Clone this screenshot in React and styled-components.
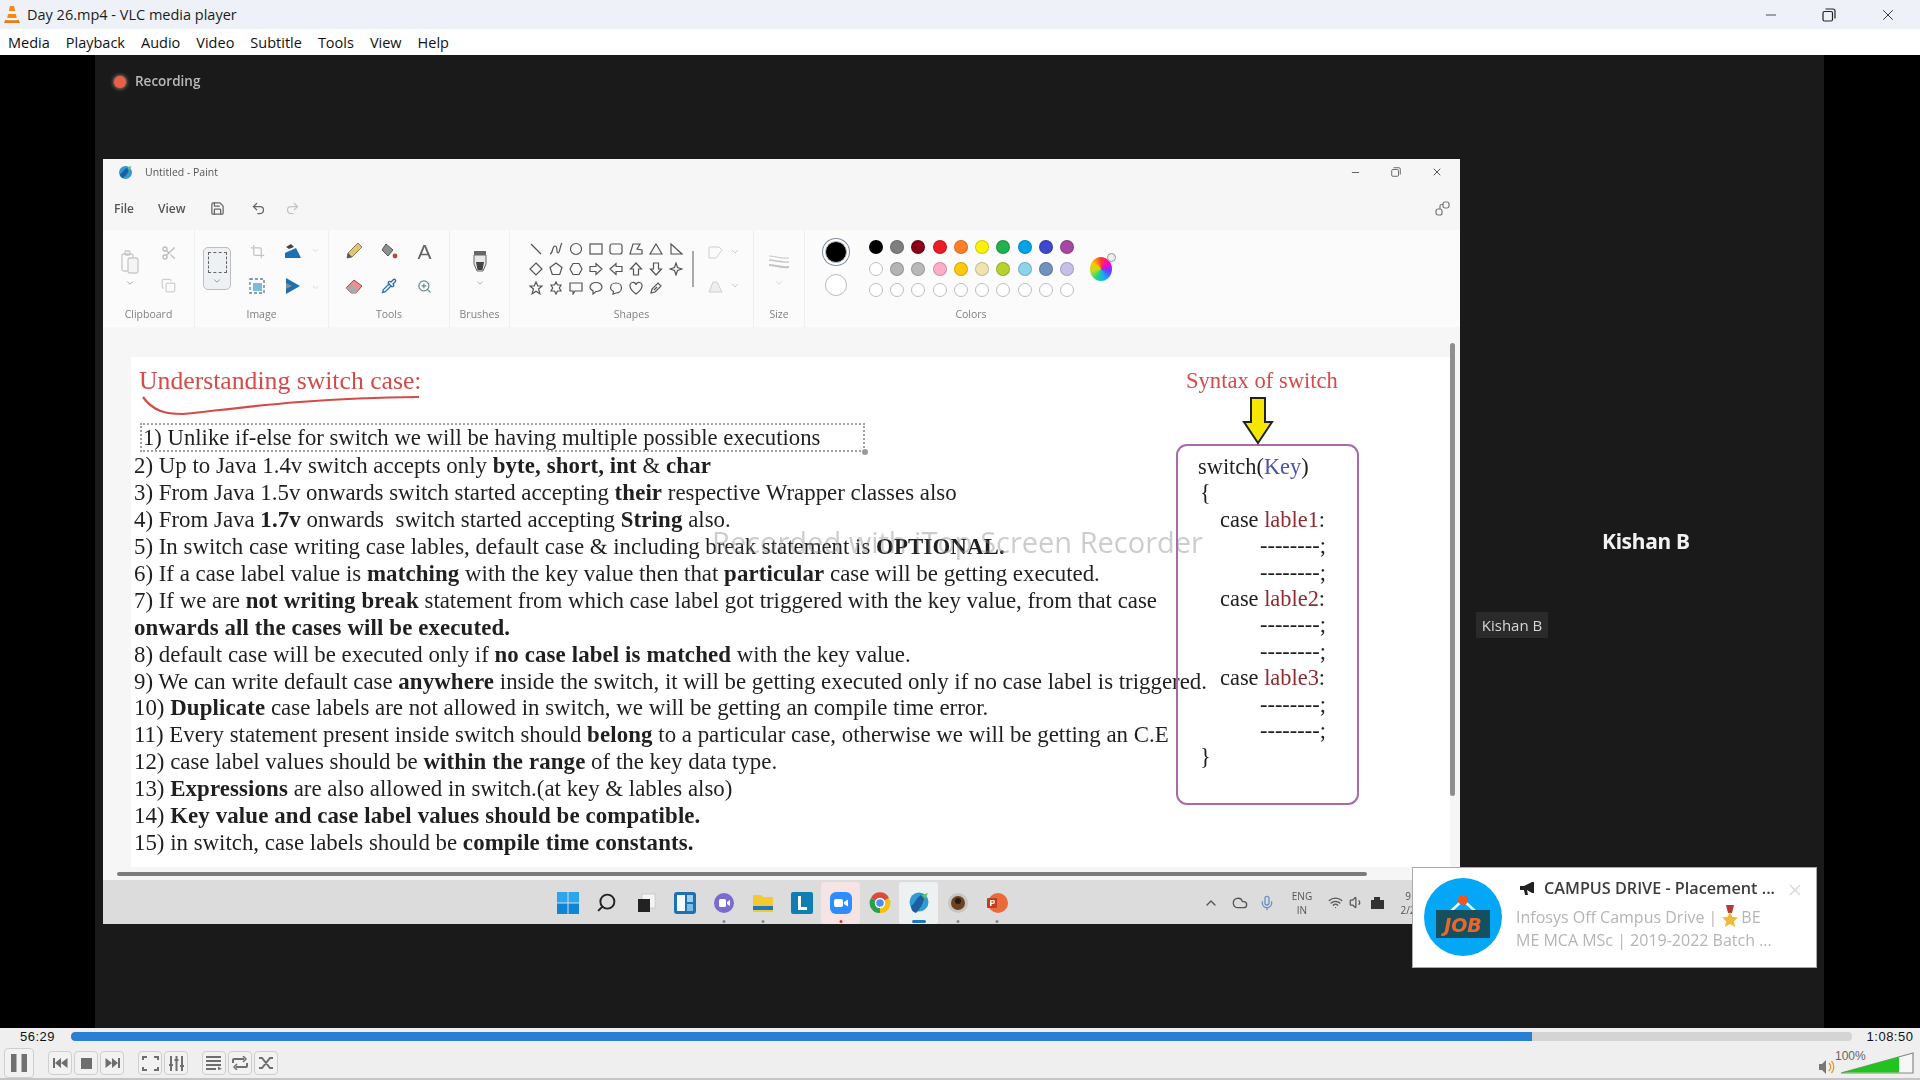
import React from 'react';
import styled, { createGlobalStyle } from 'styled-components';
import {
  Scissors, Copy, Crop, Pencil, ZoomIn, Pipette, ChevronDown, Save, Undo2, Redo2,
  Minus, X, ChevronUp, Cloud, Mic, Wifi, Volume1, Search,
} from 'lucide-react';

const GlobalStyle = createGlobalStyle`
  html, body { margin: 0; padding: 0; background: #000; overflow: hidden; }
  * { box-sizing: border-box; }
`;

const UI_FONT = `"Open Sans", "Noto Sans", sans-serif`;
const DOC_FONT = `"Liberation Serif", serif`;

/* ---------- VLC chrome ---------- */

const Player = styled.div`
  width: 1920px;
  height: 1080px;
  display: flex;
  flex-direction: column;
  font-family: ${UI_FONT};
`;

const TitleBar = styled.div`
  height: 29px;
  flex: none;
  display: flex;
  align-items: center;
  padding-left: 3px;
  background: #eef2f8;
  color: #1c1c1c;
  font-size: 14.5px;
`;

const TitleText = styled.span`
  margin-left: 6px;
`;

const WindowButtons = styled.div`
  margin-left: auto;
  display: flex;
  align-items: center;
  gap: 43px;
  padding-right: 23px;
  color: #222;
`;

const MenuBar = styled.div`
  height: 26px;
  flex: none;
  display: flex;
  align-items: center;
  gap: 16px;
  padding-left: 8px;
  background: #fff;
  color: #111;
  font-size: 14.5px;
`;

const VideoArea = styled.div`
  flex: 1;
  min-height: 0;
  background: #000;
  padding: 0 96px 0 95px;
`;

const Stage = styled.div`
  position: relative;
  height: 100%;
  background: #1a1a1a;
  display: flex;
  flex-direction: column;
`;

const RecordingBadge = styled.div`
  height: 104px;
  flex: none;
  display: flex;
  align-items: flex-start;
  gap: 9px;
  padding: 17px 0 0 19px;
  color: #b9b9b9;
  font-size: 13.5px;
  font-weight: 600;
  filter: blur(0.7px);
`;

const RecordingDot = styled.span`
  width: 12px;
  height: 12px;
  margin-top: 4px;
  border-radius: 50%;
  background: #e8604a;
  box-shadow: 0 0 4px #f5b4a6;
`;

const StageBody = styled.div`
  display: flex;
  padding-left: 8px;
`;

const SidePane = styled.div`
  flex: 1;
  display: flex;
  flex-direction: column;
  padding: 368px 0 0 16px;
`;

const SpeakerName = styled.div`
  margin-left: 126px;
  height: 38px;
  color: #f2f2f2;
  font-size: 21px;
  font-weight: 700;
  font-family: "Noto Sans", sans-serif;
  letter-spacing: -0.3px;
  filter: blur(0.4px);
`;

const SpeakerTag = styled.div`
  align-self: flex-start;
  margin-top: 47px;
  width: 72px;
  height: 26px;
  display: flex;
  align-items: center;
  justify-content: center;
  background: #2a2a2a;
  color: #d6d6d6;
  font-size: 15px;
  white-space: nowrap;
  filter: blur(0.4px);
`;

const Watermark = styled.div`
  position: absolute;
  left: 617px;
  top: 467px;
  color: rgba(135, 135, 135, 0.42);
  font-family: "Open Sans", sans-serif;
  font-size: 29px;
  white-space: nowrap;
  filter: blur(0.6px);
`;

/* ---------- Paint window ---------- */

const PaintWindow = styled.div`
  position: relative;
  width: 1357px;
  height: 765px;
  flex: none;
  display: flex;
  flex-direction: column;
  background: #f6f6f6;
  filter: blur(0.55px);
`;

const PaintTitleRow = styled.div`
  height: 28px;
  flex: none;
  display: flex;
  align-items: center;
  padding: 0 0 2px 15px;
  color: #555;
  font-size: 10.5px;
  gap: 12px;
`;

const PaintControls = styled.div`
  margin-left: auto;
  display: flex;
  align-items: center;
  gap: 30px;
  padding-right: 17px;
  color: #555;
`;

const PaintToolbar = styled.div`
  height: 43px;
  flex: none;
  display: flex;
  align-items: center;
  padding: 0 10px 0 11px;
  color: #555;
  font-size: 12px;
  font-weight: 600;
`;

const ToolbarLabel = styled.span`
  margin-right: ${p => p.$gap}px;
`;

const ToolbarIcon = styled.span`
  display: flex;
  margin-right: ${p => p.$gap}px;
  color: ${p => p.$color || '#666'};
`;

const ShareButton = styled.span`
  margin-left: auto;
  display: flex;
  color: #777;
`;

const Ribbon = styled.div`
  height: 97px;
  flex: none;
  display: flex;
  background: #fbfbfb;
`;

const RibbonGroup = styled.div`
  width: ${p => p.$width}px;
  flex: none;
  display: flex;
  flex-direction: column;
  align-items: center;
  border-right: ${p => (p.$last ? 'none' : '1px solid #f0f0f0')};
  color: #777;
`;

const GroupBody = styled.div`
  height: 77px;
  width: 100%;
  display: flex;
  align-items: center;
  justify-content: center;
`;

const GroupLabel = styled.div`
  font-size: 10.5px;
  color: #808080;
  line-height: 14px;
`;

const IconGrid = styled.div`
  display: grid;
  grid-template-columns: repeat(${p => p.$cols}, ${p => p.$w}px);
  grid-auto-rows: ${p => p.$h}px;
  align-items: center;
  justify-items: center;
`;

const Stack = styled.div`
  display: flex;
  flex-direction: column;
  align-items: center;
  gap: ${p => p.$gap || 0}px;
  margin-right: ${p => p.$mr || 0}px;
  margin-left: ${p => p.$ml || 0}px;
  margin-top: ${p => p.$mt || 0}px;
`;

const SelectionBox = styled.div`
  width: 28px;
  height: 43px;
  margin-right: 8px;
  border: 1.5px solid #b8c0c6;
  border-radius: 5px;
  background: #edf1f3;
  display: flex;
  flex-direction: column;
  align-items: center;
  padding-top: 4px;
  color: #888;
`;

const SelectionMark = styled.div`
  width: 19px;
  height: 21px;
  margin-bottom: 3px;
  border: 1.5px dashed #666;
`;

const TextTool = styled.span`
  color: #666;
  font-family: "Liberation Sans", sans-serif;
  font-size: 21px;
  line-height: 1;
`;

const ShapesPanel = styled.div`
  display: flex;
  align-items: center;
  gap: 4px;
  color: #555;
`;

const ShapesScroll = styled.div`
  width: 2px;
  height: 36px;
  margin-left: 2px;
  background: #aaa;
`;

const ColorLayout = styled.div`
  display: flex;
  align-items: center;
  padding-left: 20px;
  width: 100%;
`;

const ActiveColors = styled.div`
  display: flex;
  flex-direction: column;
  align-items: center;
  gap: 11px;
  margin-right: 18px;
`;

const ActiveSwatch = styled.div`
  width: 22px;
  height: 22px;
  border-radius: 50%;
  background: ${p => p.$color};
  border: 1px solid #bbb;
  box-shadow: ${p => (p.$selected ? '0 0 0 2px #fff, 0 0 0 3px #7f8fa3' : 'none')};
`;

const SwatchGrid = styled.div`
  display: grid;
  flex: none;
  grid-template-columns: repeat(10, 21.3px);
  grid-auto-rows: 21.5px;
  align-items: center;
  justify-items: center;
`;

const Swatch = styled.div`
  width: 14px;
  height: 14px;
  border-radius: 50%;
  background: ${p => p.$color || '#fff'};
  border: 1px solid ${p => (p.$color && p.$color !== '#fff' ? 'rgba(0,0,0,0.18)' : '#bdbdbd')};
`;

const ColorWheel = styled.div`
  position: relative;
  width: 22px;
  height: 24px;
  flex: none;
  margin-left: 12px;
  border-radius: 50%;
  background: conic-gradient(#ff3b30, #ff00c8, #6a3cff, #19a7ff, #20d48a, #b7e21d, #ffc400, #ff3b30);
`;

const WheelBadge = styled.span`
  position: absolute;
  right: -4px;
  top: -4px;
  width: 9px;
  height: 9px;
  border-radius: 50%;
  background: #eee;
  border: 1px solid #999;
`;

const CanvasArea = styled.div`
  height: 553px;
  flex: none;
  padding: 30px 10px 13px 28px;
`;

const Canvas = styled.div`
  height: 100%;
  background: #fff;
  display: flex;
  font-family: ${DOC_FONT};
  color: #1f1f1f;
`;

const NotesColumn = styled.div`
  width: 1045px;
  flex: none;
  padding: 10px 0 0 3px;
`;

const Heading = styled.div`
  padding-left: 5px;
  height: 28px;
  line-height: 28px;
  font-size: 25.7px;
  color: #d44b48;
  white-space: nowrap;
`;

const Scribble = styled.svg`
  display: block;
  margin-left: 8px;
`;

const SelectedLine = styled.div`
  position: relative;
  width: 725px;
  height: 29px;
  margin: 7px 0 0 6px;
  padding-left: 1px;
  border: 2px dotted #a0a0a0;
  line-height: 25px;
  font-size: 22.7px;
  white-space: nowrap;
`;

const Handle = styled.span`
  position: absolute;
  right: -5px;
  bottom: -5px;
  width: 6px;
  height: 6px;
  border-radius: 50%;
  background: #9a9a9a;
`;

const NoteLine = styled.div`
  height: 26.95px;
  line-height: 27px;
  font-size: 22.87px;
  white-space: nowrap;

  b {
    letter-spacing: 0.12px;
  }
`;

const SyntaxColumn = styled.div`
  width: 183px;
  flex: none;
  display: flex;
  flex-direction: column;
  padding-top: 10px;
`;

const SyntaxTitle = styled.div`
  height: 28px;
  line-height: 28px;
  margin-left: 10px;
  font-size: 22.6px;
  color: #d44b48;
  white-space: nowrap;
`;

const SyntaxArrow = styled.svg`
  display: block;
  margin: 2px 0 0 66px;
  position: relative;
  z-index: 1;
`;

const SyntaxBox = styled.div`
  height: 361px;
  margin-top: -1px;
  padding: 8px 0 0 20px;
  border: 2.5px solid #a86aa9;
  border-radius: 11px;
  font-size: 22.4px;
`;

const CodeLine = styled.div`
  height: 26.4px;
  line-height: 26.4px;
  padding-left: ${p => p.$indent || 0}px;
  white-space: nowrap;
`;

const Accent = styled.span`
  color: ${p => p.$color};
`;

const VScroll = styled.div`
  position: absolute;
  left: 1347px;
  top: 184px;
  width: 5px;
  height: 453px;
  border-radius: 3px;
  background: #8e8e8e;
`;

const HScroll = styled.div`
  position: absolute;
  left: 14px;
  top: 713px;
  width: 1250px;
  height: 4px;
  border-radius: 2px;
  background: #7c7c7c;
`;

const Taskbar = styled.div`
  height: 44px;
  flex: none;
  display: flex;
  align-items: center;
  padding: 1px 0 0 445px;
  background: #dcdcdc;
`;

const TaskCell = styled.div`
  position: relative;
  width: 39px;
  height: 42px;
  flex: none;
  display: flex;
  align-items: center;
  justify-content: center;
  background: ${p => p.$bg || 'transparent'};
  border-radius: 3px;
`;

const TaskDot = styled.span`
  position: absolute;
  bottom: 1px;
  left: 50%;
  transform: translateX(-50%);
  width: ${p => p.$w || 3}px;
  height: 3px;
  border-radius: 2px;
  background: ${p => p.$color};
`;

const Tray = styled.div`
  display: flex;
  flex: none;
  align-items: center;
  margin-left: 187px;
  color: #555;
`;

const TrayItem = styled.span`
  display: flex;
  margin-right: ${p => p.$gap}px;
`;

const TrayLang = styled.div`
  width: 24px;
  margin-right: 14px;
  font-size: 10px;
  line-height: 14px;
  text-align: center;
  color: #555;
`;

/* ---------- notification ---------- */

const Notification = styled.div`
  position: absolute;
  left: 1317px;
  top: 812px;
  width: 405px;
  height: 101px;
  display: flex;
  padding: 10px 0 0 11px;
  background: #fff;
  border: 1px solid #aaa;
  filter: blur(0.35px);
`;

const NotifyText = styled.div`
  margin-left: 14px;
  width: 270px;
`;

const NotifyTitle = styled.div`
  display: flex;
  align-items: center;
  gap: 9px;
  height: 20px;
  margin-left: 3px;
  color: #3c3c3c;
  font-size: 16.2px;
  font-weight: 600;
  white-space: nowrap;
`;

const NotifyBody = styled.div`
  margin-top: 7px;
  color: #b5b5b5;
  font-size: 16px;
  line-height: 23px;
  white-space: nowrap;
`;

const NotifyClose = styled.span`
  position: absolute;
  right: 12px;
  top: 13px;
  display: flex;
  color: #d8d8d8;
`;

const Medal = styled.svg`
  vertical-align: -4px;
  margin: 0 3px 0 5px;
`;

/* ---------- VLC controls ---------- */

const Controls = styled.div`
  height: 52px;
  flex: none;
  display: flex;
  flex-direction: column;
  background: #efefef;
  border-bottom: 2px solid #c4c4c4;
`;

const SeekRow = styled.div`
  height: 18px;
  flex: none;
  padding-bottom: 1px;
  display: flex;
  align-items: center;
  font-family: "Liberation Sans", sans-serif;
  font-size: 13px;
  letter-spacing: 0.5px;
  color: #111;
`;

const TimeLabel = styled.span`
  width: ${p => p.$width}px;
  flex: none;
  padding-left: ${p => p.$pad}px;
  text-align: center;
`;

const SeekTrack = styled.div`
  flex: 1;
  height: 9px;
  border-radius: 4px;
  background: #d4d4d4;
  overflow: hidden;
`;

const SeekFill = styled.div`
  height: 100%;
  border-radius: 4px 0 0 4px;
  background: #2a7ed3;
`;

const ButtonRow = styled.div`
  flex: 1;
  display: flex;
  align-items: center;
  padding: 2px 0 0 4px;
`;

const CtrlButton = styled.button`
  width: ${p => p.$size || 24}px;
  height: ${p => p.$size || 24}px;
  margin-right: ${p => p.$gap ?? 2}px;
  padding: 0;
  display: flex;
  align-items: center;
  justify-content: center;
  background: #f2f2f2;
  border: 1px solid #cfcfcf;
  border-radius: 4px;
  color: #6e6e6e;
`;

const VolumeArea = styled.div`
  position: relative;
  margin-left: auto;
  margin-right: 6px;
  display: flex;
  align-items: flex-end;
  gap: 5px;
`;

const VolumeLabel = styled.span`
  position: absolute;
  left: 16px;
  top: -3px;
  font-family: "Liberation Sans", sans-serif;
  font-size: 12px;
  color: #666;
`;

/* ---------- drawings ---------- */

const VlcCone = () => (
  <svg width="18" height="19" viewBox="0 0 18 19">
    <path d="M7 1h4l1.2 5H5.8z" fill="#f08a1d" />
    <path d="M5.8 6h6.4l.7 3H5.1z" fill="#f4f4f4" />
    <path d="M5.1 9h7.8l1 4H4.1z" fill="#f08a1d" />
    <path d="M4.1 13h9.8l.5 2H3.6z" fill="#f4f4f4" />
    <path d="M2.5 14.5 1 18h16l-1.5-3.5-1 .8H3.5z" fill="#e87c10" />
  </svg>
);

const RestoreIcon = ({ size = 14 }) => (
  <svg width={size} height={size} viewBox="0 0 14 14" fill="none" stroke="currentColor" strokeWidth="1.2">
    <rect x="1" y="3.5" width="9.5" height="9.5" rx="1.5" />
    <path d="M3.5 1h7.5a2 2 0 0 1 2 2v7.5" />
  </svg>
);

const PaintLogo = () => (
  <svg width="15" height="15" viewBox="0 0 15 15">
    <circle cx="7.5" cy="7.5" r="6.5" fill="#2f9ad6" />
    <path d="M2 9c3-1 4-6 9-7 1 3-2 8-6 11-2-.5-3-2-3-4z" fill="#1d5f9e" />
    <path d="M9 2.5 13.5 1 11 6z" fill="#5dc26a" />
  </svg>
);

const LinkedBoxes = () => (
  <svg width="15" height="15" viewBox="0 0 15 15" fill="none" stroke="currentColor" strokeWidth="1.2">
    <rect x="1" y="8" width="6" height="6" rx="2" />
    <rect x="8" y="1" width="6" height="6" rx="2" />
    <path d="M5 8V5a1.500 1.500 0 0 1 1.500-1.500H8" />
  </svg>
);

const PasteIcon = () => (
  <svg width="18" height="24" viewBox="0 0 18 24" fill="none" stroke="#c9c9c9" strokeWidth="1.3">
    <rect x="1" y="4" width="11" height="17" rx="2" />
    <rect x="7" y="8" width="10" height="15" rx="2" fill="#f4f4f4" />
    <rect x="4" y="1" width="5" height="4" rx="1" />
  </svg>
);

const ResizeIcon = () => (
  <svg width="16" height="16" viewBox="0 0 16 16">
    <rect x="1" y="1" width="14" height="14" fill="none" stroke="#5b7f9e" strokeWidth="1.3" strokeDasharray="3 2" />
    <rect x="4" y="5" width="9" height="8" fill="#7fb9dc" />
  </svg>
);

const RotateIcon = () => (
  <svg width="18" height="16" viewBox="0 0 18 16">
    <path d="M1 15V10l11-5 5 10z" fill="#1b6fb3" />
    <path d="M2 4 7 1l3 3-5 2z" fill="#444" />
  </svg>
);

const FlipIcon = () => (
  <svg width="16" height="18" viewBox="0 0 16 18">
    <path d="M1 1l14 8-14 8z" fill="#1b6fb3" />
    <path d="M1 6l6 3-6 3z" fill="#8a8a8a" />
  </svg>
);

const PencilIcon = () => (
  <svg width="18" height="18" viewBox="0 0 18 18">
    <path d="M2 16l1-5L13 1l4 4L7 15z" fill="#e3c27a" stroke="#8a7a50" strokeWidth="1" />
    <path d="M2 16l1-5 4 4z" fill="#555" />
  </svg>
);

const FillIcon = () => (
  <svg width="18" height="18" viewBox="0 0 18 18">
    <path d="M6 2l7 6-5 6-6-6z" fill="#8f8f8f" stroke="#555" />
    <circle cx="15" cy="14" r="2.4" fill="#b5482f" />
  </svg>
);

const EraserIcon = () => (
  <svg width="18" height="17" viewBox="0 0 18 17">
    <path d="M1 10l8-8 8 6-6 7H6z" fill="#ec8f91" stroke="#8a5555" />
    <path d="M1 10l5 5h5l2-3-6-5z" fill="#aaa" />
  </svg>
);

const BrushIcon = () => (
  <svg width="14" height="22" viewBox="0 0 14 22">
    <rect x="1" y="1" width="12" height="4" fill="#666" />
    <path d="M1 5h12v9l-3 7H4l-3-7z" fill="#e8e8e8" stroke="#666" />
    <path d="M3 12h8l-1.5 8h-5z" fill="#444" />
  </svg>
);

const LinesIcon = () => (
  <svg width="22" height="16" viewBox="0 0 22 16" fill="none" stroke="#c4c4c4">
    <path d="M1 2c6 0 12 3 20 2" strokeWidth="1" />
    <path d="M1 6c6 0 12 3 20 2" strokeWidth="1.4" />
    <path d="M1 11c6 0 12 3 20 2" strokeWidth="2" />
  </svg>
);

const SHAPES = [
  <path d="M2 2l10 10" />,
  <path d="M1 12c3 0 2-8 5-8s1 7 3 7 2-8 4-10" />,
  <circle cx="7" cy="7" r="5.5" />,
  <rect x="1" y="2" width="12" height="10" />,
  <rect x="1" y="2" width="12" height="10" rx="2" />,
  <path d="M1 12l3-10h7l-3 5 5 1v4z" />,
  <path d="M7 2l6 10H1z" />,
  <path d="M2 2l11 10H2z" />,
  <path d="M7 1l6 6-6 6-6-6z" />,
  <path d="M7 1l6 4.5-2.3 7H3.3L1 5.500z" />,
  <path d="M4 1.500h6L13 7l-3 5.500H4L1 7z" />,
  <path d="M1 4.500h6V1.500L13 7l-6 5.500V9.500H1z" />,
  <path d="M13 4.500H7V1.500L1 7l6 5.500V9.500h6z" />,
  <path d="M4.500 13V7h-3L7 1l5.500 6h-3v6z" />,
  <path d="M4.500 1v6h-3L7 13l5.500-6h-3V1z" />,
  <path d="M7 1l1.500 4.500L13 7l-4.500 1.500L7 13l-1.500-4.500L1 7l4.500-1.500z" />,
  <path d="M7 1l1.800 4H13l-3.400 3 1.300 4.800L7 10.200 3.100 12.800 4.400 8 1 5h4.200z" />,
  <path d="M7 1l1.500 3H12l-1.700 3L12 10H8.500L7 13l-1.500-3H2l1.700-3L2 4h3.500z" />,
  <path d="M1 2h12v8H6l-2 3v-3H1z" />,
  <path d="M7 1.500c3.300 0 6 2 6 4.500s-2.700 4.500-6 4.500l-3 2.500v-3.200C2.200 9 1 7.600 1 6c0-2.500 2.700-4.500 6-4.500z" />,
  <path d="M7 2c3 0 5.500 2 5.500 5S10 12 7 12l-3 1 .5-2.500C2.500 9.500 1.500 8.500 1.500 7 1.500 4 4 2 7 2z" />,
  <path d="M7 13C3 10 1 7.500 1 5a3 3 0 0 1 6-1 3 3 0 0 1 6 1c0 2.500-2 5-6 8z" />,
  <path d="M2 12l1-4 6-6 3 3-6 6zM5 9l3-3" />,
];

const Shape = ({ children }) => (
  <svg width="14" height="14" viewBox="0 0 14 14" fill="none" stroke="currentColor" strokeWidth="1.2">
    {children}
  </svg>
);

const PALETTE = [
  '#000000', '#7f7f7f', '#880015', '#ed1c24', '#ff7f27', '#fff200', '#22b14c', '#00a2e8', '#3f48cc', '#a349a4',
  '#fff', '#b4b4b4', '#b9b9b9', '#ffaec9', '#ffc90e', '#efe4b0', '#b5d32d', '#8fd3ea', '#7092be', '#c8bfe7',
  '', '', '', '', '', '', '', '', '', '',
];

const TASK_ICONS = [
  { key: 'start', icon: (
    <svg width="22" height="22" viewBox="0 0 22 22">
      <rect x="0" y="0" width="10.500" height="10.500" fill="#2aa5ee" />
      <rect x="11.500" y="0" width="10.500" height="10.500" fill="#2aa5ee" />
      <rect x="0" y="11.500" width="10.500" height="10.500" fill="#0e86d8" />
      <rect x="11.500" y="11.500" width="10.500" height="10.500" fill="#0e86d8" />
    </svg>
  ) },
  { key: 'search', icon: <Search size={21} color="#222" strokeWidth={2.2} style={{ transform: 'scaleX(-1)' }} /> },
  { key: 'views', icon: (
    <svg width="20" height="20" viewBox="0 0 20 20">
      <rect x="6" y="1" width="13" height="14" fill="#f4f4f4" stroke="#bbb" strokeWidth="0.6" />
      <rect x="2" y="6" width="12" height="13" fill="#222" />
    </svg>
  ) },
  { key: 'widgets', icon: (
    <svg width="22" height="22" viewBox="0 0 22 22">
      <rect x="0" y="0" width="22" height="22" rx="3" fill="#1f6fb5" />
      <rect x="3" y="3" width="8" height="16" fill="#f4f9fc" />
      <rect x="13" y="3" width="6" height="7" fill="#9fd0ee" />
      <rect x="13" y="12" width="6" height="7" fill="#7cbce4" />
    </svg>
  ) },
  { key: 'chat', icon: (
    <svg width="22" height="22" viewBox="0 0 22 22">
      <circle cx="11" cy="11" r="10" fill="#7b6ad0" />
      <rect x="6" y="7" width="7" height="8" rx="1.500" fill="#fff" />
      <path d="M14 10l3-2v6l-3-2z" fill="#fff" />
    </svg>
  ), dot: '#888' },
  { key: 'files', icon: (
    <svg width="22" height="22" viewBox="0 0 22 22">
      <path d="M1 3h8l2 2h10v15H1z" fill="#f5c92f" />
      <rect x="1" y="14" width="20" height="4" fill="#1b78c4" />
    </svg>
  ), dot: '#888' },
  { key: 'lync', icon: (
    <svg width="22" height="22" viewBox="0 0 22 22">
      <rect x="0" y="0" width="22" height="22" rx="2" fill="#0f7fb3" />
      <path d="M7 4h3v11h6v3H7z" fill="#fff" />
    </svg>
  ) },
  { key: 'zoom', bg: '#f6e3e3', dot: '#d03a2a', icon: (
    <svg width="22" height="22" viewBox="0 0 22 22">
      <rect x="0" y="0" width="22" height="22" rx="6" fill="#2d8cff" />
      <rect x="4" y="7" width="9" height="8" rx="2" fill="#fff" />
      <path d="M14 10l4-2.500v7L14 12z" fill="#fff" />
    </svg>
  ) },
  { key: 'chrome', icon: (
    <svg width="22" height="22" viewBox="0 0 22 22">
      <path d="M11 11 2 6a10 10 0 0 1 18 0z" fill="#dc4a3d" />
      <path d="M11 11 20 6a10 10 0 0 1-9 15z" fill="#f4c20d" />
      <path d="M11 11v10A10 10 0 0 1 2 6z" fill="#2aa04c" />
      <circle cx="11" cy="11" r="4.500" fill="#4a8ef0" stroke="#fff" strokeWidth="1.500" />
    </svg>
  ) },
  { key: 'paint', bg: '#eef1f2', dot: '#1b78c4', dotW: 14, icon: (
    <svg width="22" height="24" viewBox="0 0 22 24">
      <circle cx="11" cy="11" r="9.500" fill="#2f9ad6" />
      <path d="M3 15c4-2 5-9 12-12 3 4-1 13-7 19-3-1-5-3-5-7z" fill="#1d5f9e" />
      <path d="M13 4l7-2-3 6z" fill="#5dc26a" />
    </svg>
  ) },
  { key: 'obs', dot: '#888', icon: (
    <svg width="22" height="22" viewBox="0 0 22 22">
      <circle cx="11" cy="11" r="10" fill="#c9c4be" />
      <circle cx="11" cy="11" r="7" fill="#6a4226" />
      <circle cx="11" cy="9" r="3" fill="#2a1a10" />
    </svg>
  ) },
  { key: 'ppt', dot: '#888', icon: (
    <svg width="22" height="22" viewBox="0 0 22 22">
      <circle cx="12" cy="11" r="10" fill="#ea6a3a" />
      <rect x="1" y="6" width="10" height="10" rx="1" fill="#c43e1c" />
      <path d="M4 8h3a2 2 0 0 1 0 4H5.500v2H4zM5.500 9.300v1.500H7a.75.75 0 0 0 0-1.500z" fill="#fff" />
    </svg>
  ) },
];

const NOTES = [
  <>2) Up to Java 1.4v switch accepts only <b>byte, short, int</b> &amp; <b>char</b></>,
  <>3) From Java 1.5v onwards switch started accepting <b>their</b> respective Wrapper classes also</>,
  <>4) From Java <b>1.7v</b> onwards&nbsp; switch started accepting <b>String</b> also.</>,
  <>5) In switch case writing case lables, default case &amp; including break statement is <b>OPTIONAL.</b></>,
  <>6) If a case label value is <b>matching</b> with the key value then that <b>particular</b> case will be getting executed.</>,
  <>7) If we are <b>not writing break</b> statement from which case label got triggered with the key value, from that case</>,
  <b>onwards all the cases will be executed.</b>,
  <>8) default case will be executed only if <b>no case label is matched</b> with the key value.</>,
  <>9) We can write default case <b>anywhere</b> inside the switch, it will be getting executed only if no case label is triggered.</>,
  <>10) <b>Duplicate</b> case labels are not allowed in switch, we will be getting an compile time error.</>,
  <>11) Every statement present inside switch should <b>belong</b> to a particular case, otherwise we will be getting an C.E</>,
  <>12) case label values should be <b>within the range</b> of the key data type.</>,
  <>13) <b>Expressions</b> are also allowed in switch.(at key &amp; lables also)</>,
  <>14) <b>Key value and case label values should be compatible.</b></>,
  <>15) in switch, case labels should be <b>compile time constants.</b></>,
];

const CASES = ['lable1', 'lable2', 'lable3'];

const PaintApp = () => (
  <PaintWindow>
    <PaintTitleRow>
      <PaintLogo />
      <span>Untitled - Paint</span>
      <PaintControls>
        <Minus size={11} />
        <RestoreIcon size={10} />
        <X size={12} />
      </PaintControls>
    </PaintTitleRow>

    <PaintToolbar>
      <ToolbarLabel $gap={24}>File</ToolbarLabel>
      <ToolbarLabel $gap={24}>View</ToolbarLabel>
      <ToolbarIcon $gap={26}><Save size={15} /></ToolbarIcon>
      <ToolbarIcon $gap={19}><Undo2 size={15} /></ToolbarIcon>
      <ToolbarIcon $color="#c4c4c4" $gap={0}><Redo2 size={15} /></ToolbarIcon>
      <ShareButton><LinkedBoxes /></ShareButton>
    </PaintToolbar>

    <Ribbon>
      <RibbonGroup $width={92}>
        <GroupBody>
          <Stack $gap={4} $mr={22}>
            <PasteIcon />
            <ChevronDown size={10} color="#999" />
          </Stack>
          <Stack $gap={17}>
            <Scissors size={16} color="#bdbdbd" />
            <Copy size={15} color="#cfcfcf" />
          </Stack>
        </GroupBody>
        <GroupLabel>Clipboard</GroupLabel>
      </RibbonGroup>

      <RibbonGroup $width={134}>
        <GroupBody>
          <SelectionBox>
            <SelectionMark />
            <ChevronDown size={10} />
          </SelectionBox>
          <IconGrid $cols={2} $w={36} $h={35}>
            <Crop size={15} color="#c4c4c4" />
            <RotateIcon />
            <ResizeIcon />
            <FlipIcon />
          </IconGrid>
          <Stack $gap={28}>
            <ChevronDown size={9} color="#ccc" />
            <ChevronDown size={9} color="#ccc" />
          </Stack>
        </GroupBody>
        <GroupLabel>Image</GroupLabel>
      </RibbonGroup>

      <RibbonGroup $width={121}>
        <GroupBody>
          <IconGrid $cols={3} $w={35.5} $h={35}>
            <PencilIcon />
            <FillIcon />
            <TextTool>A</TextTool>
            <EraserIcon />
            <Pipette size={16} color="#2b6fa8" />
            <ZoomIn size={15} color="#6b8a8a" />
          </IconGrid>
        </GroupBody>
        <GroupLabel>Tools</GroupLabel>
      </RibbonGroup>

      <RibbonGroup $width={60}>
        <GroupBody>
          <Stack $gap={6}>
            <BrushIcon />
            <ChevronDown size={10} color="#aaa" />
          </Stack>
        </GroupBody>
        <GroupLabel>Brushes</GroupLabel>
      </RibbonGroup>

      <RibbonGroup $width={244}>
        <GroupBody>
          <ShapesPanel>
            <IconGrid $cols={8} $w={20} $h={19.5}>
              {SHAPES.map((s, i) => <Shape key={i}>{s}</Shape>)}
            </IconGrid>
            <ShapesScroll />
          </ShapesPanel>
          <Stack $gap={18} $ml={14}>
            <svg width="30" height="16" viewBox="0 0 30 16" fill="none" stroke="#cfcfcf">
              <path d="M1 3h10l3 3-6 8H1z" />
              <path d="M24 6l3 3 3-3" stroke="#ccc" />
            </svg>
            <svg width="30" height="16" viewBox="0 0 30 16" fill="none" stroke="#cfcfcf">
              <path d="M1 14l4-10h4l5 10z" fill="#eee" />
              <path d="M24 6l3 3 3-3" stroke="#ccc" />
            </svg>
          </Stack>
        </GroupBody>
        <GroupLabel>Shapes</GroupLabel>
      </RibbonGroup>

      <RibbonGroup $width={51}>
        <GroupBody>
          <Stack $gap={8} $mt={4}>
            <LinesIcon />
            <ChevronDown size={10} color="#ccc" />
          </Stack>
        </GroupBody>
        <GroupLabel>Size</GroupLabel>
      </RibbonGroup>

      <RibbonGroup $width={332} $last>
        <GroupBody>
          <ColorLayout>
            <ActiveColors>
              <ActiveSwatch $color="#000" $selected />
              <ActiveSwatch $color="#fff" />
            </ActiveColors>
            <SwatchGrid>
              {PALETTE.map((c, i) => <Swatch key={i} $color={c} />)}
            </SwatchGrid>
            <ColorWheel><WheelBadge /></ColorWheel>
          </ColorLayout>
        </GroupBody>
        <GroupLabel>Colors</GroupLabel>
      </RibbonGroup>
    </Ribbon>

    <CanvasArea>
      <Canvas>
        <NotesColumn>
          <Heading>Understanding switch case:</Heading>
          <Scribble width="280" height="21" viewBox="0 0 280 21" fill="none">
            <path d="M1 2c10 14 22 17 40 17 50-5 120-16 236-17" stroke="#d44b48" strokeWidth="2.2" />
          </Scribble>
          <SelectedLine>
            1) Unlike if-else for switch we will be having multiple possible executions
            <Handle />
          </SelectedLine>
          {NOTES.map((line, i) => <NoteLine key={i}>{line}</NoteLine>)}
        </NotesColumn>

        <SyntaxColumn>
          <SyntaxTitle>Syntax of switch</SyntaxTitle>
          <SyntaxArrow width="32" height="48" viewBox="0 0 32 48">
            <path d="M9 1h14v24h7L16 46 2 25h7z" fill="#f7e600" stroke="#222" strokeWidth="2" />
          </SyntaxArrow>
          <SyntaxBox>
            <CodeLine>switch(<Accent $color="#4a55a8">Key</Accent>)</CodeLine>
            <CodeLine $indent={2}>{'{'}</CodeLine>
            {CASES.map(name => (
              <React.Fragment key={name}>
                <CodeLine $indent={22}>case <Accent $color="#8e2b30">{name}</Accent>:</CodeLine>
                <CodeLine $indent={62}>--------;</CodeLine>
                <CodeLine $indent={62}>--------;</CodeLine>
              </React.Fragment>
            ))}
            <CodeLine $indent={2}>{'}'}</CodeLine>
          </SyntaxBox>
        </SyntaxColumn>
      </Canvas>
    </CanvasArea>

    <Taskbar>
      {TASK_ICONS.map(t => (
        <TaskCell key={t.key} $bg={t.bg}>
          {t.icon}
          {t.dot && <TaskDot $color={t.dot} $w={t.dotW} />}
        </TaskCell>
      ))}
      <Tray>
        <TrayItem $gap={13}><ChevronUp size={16} /></TrayItem>
        <TrayItem $gap={11}><Cloud size={16} /></TrayItem>
        <TrayItem $gap={15}><Mic size={16} color="#6a93c4" /></TrayItem>
        <TrayLang>ENG<br />IN</TrayLang>
        <TrayItem $gap={6}><Wifi size={15} /></TrayItem>
        <TrayItem $gap={6}><Volume1 size={15} /></TrayItem>
        <TrayItem $gap={11}>
          <svg width="15" height="14" viewBox="0 0 15 14"><path d="M1 4h3V1h6v3h4v9H1z" fill="#333" /></svg>
        </TrayItem>
        <TrayLang>9<br />2/2</TrayLang>
      </Tray>
    </Taskbar>

    <VScroll />
    <HScroll />
  </PaintWindow>
);

const JobLogo = () => (
  <svg width="78" height="78" viewBox="0 0 78 78" style={{ flex: 'none' }}>
    <circle cx="39" cy="39" r="39" fill="#04a7f5" />
    <path d="M27 33l12-11 12 11" fill="none" stroke="#e8f6fc" strokeWidth="2.500" />
    <circle cx="39" cy="22" r="5" fill="#f0561e" />
    <rect x="12" y="32" width="54" height="28" fill="#14505f" />
    <text x="39" y="54" textAnchor="middle" fontFamily="DejaVu Sans, sans-serif" fontSize="19" fontStyle="italic" fontWeight="700" fill="#e9672d">JOB</text>
  </svg>
);

const Notice = () => (
  <Notification>
    <JobLogo />
    <NotifyText>
      <NotifyTitle>
        <svg width="16" height="15" viewBox="0 0 16 15"><path d="M1 5h4l8-4h2v11h-2L8 9l1 5H6L5 9H1z" fill="#222" /></svg>
        CAMPUS DRIVE - Placement ...
      </NotifyTitle>
      <NotifyBody>
        Infosys Off Campus Drive |
        <Medal width="16" height="22" viewBox="0 0 16 22">
          <path d="M4 0h8l-2 8H6z" fill="#b33a3a" />
          <path d="M8 7l2.400 5 5.600.6-4.200 3.800L13 22l-5-3-5 3 1.200-5.600L0 12.600 5.600 12z" fill="#f0b93a" />
        </Medal>
        BE<br />
        ME MCA MSc | 2019-2022 Batch ...
      </NotifyBody>
    </NotifyText>
    <NotifyClose><X size={18} /></NotifyClose>
  </Notification>
);

const App = () => (
  <>
    <GlobalStyle />
    <Player>
      <TitleBar>
        <VlcCone />
        <TitleText>Day 26.mp4 - VLC media player</TitleText>
        <WindowButtons>
          <Minus size={16} strokeWidth={1.2} />
          <RestoreIcon />
          <X size={18} strokeWidth={1.2} />
        </WindowButtons>
      </TitleBar>

      <MenuBar>
        {['Media', 'Playback', 'Audio', 'Video', 'Subtitle', 'Tools', 'View', 'Help'].map(m => (
          <span key={m}>{m}</span>
        ))}
      </MenuBar>

      <VideoArea>
        <Stage>
          <RecordingBadge><RecordingDot />Recording</RecordingBadge>
          <StageBody>
            <PaintApp />
            <SidePane>
              <SpeakerName>Kishan B</SpeakerName>
              <SpeakerTag>Kishan B</SpeakerTag>
            </SidePane>
          </StageBody>
          <Watermark>Recorded with iTop Screen Recorder</Watermark>
          <Notice />
        </Stage>
      </VideoArea>

      <Controls>
        <SeekRow>
          <TimeLabel $width={71} $pad={4}>56:29</TimeLabel>
          <SeekTrack><SeekFill style={{ width: `${(3389 / 4130) * 100}%` }} /></SeekTrack>
          <TimeLabel $width={68} $pad={8}>1:08:50</TimeLabel>
        </SeekRow>
        <ButtonRow>
          <CtrlButton $size={30} $gap={14}>
            <svg width="16" height="18" viewBox="0 0 16 18"><rect x="0" y="0" width="5.500" height="18" fill="#707070" /><rect x="10.500" y="0" width="5.500" height="18" fill="#707070" /></svg>
          </CtrlButton>
          <CtrlButton>
            <svg width="15" height="10" viewBox="0 0 15 10" fill="currentColor"><rect width="2" height="10" /><path d="M8 0v10L2 5zM14.500 0v10l-6.500-5z" /></svg>
          </CtrlButton>
          <CtrlButton>
            <svg width="11" height="11" viewBox="0 0 11 11" fill="currentColor"><rect width="11" height="11" /></svg>
          </CtrlButton>
          <CtrlButton $gap={14}>
            <svg width="15" height="10" viewBox="0 0 15 10" fill="currentColor"><rect x="13" width="2" height="10" /><path d="M7 0v10l6-5zM.5 0v10L7 5z" /></svg>
          </CtrlButton>
          <CtrlButton>
            <svg width="17" height="15" viewBox="0 0 17 15" fill="none" stroke="currentColor" strokeWidth="2"><path d="M1 4V1h4M12 1h4v3M16 11v3h-4M5 14H1v-3" /></svg>
          </CtrlButton>
          <CtrlButton $gap={14}>
            <svg width="17" height="15" viewBox="0 0 17 15" fill="none" stroke="currentColor" strokeWidth="2"><path d="M3 0v15M8.500 0v15M14 0v15M1 9h4M6.500 4h4M12 10h4" /></svg>
          </CtrlButton>
          <CtrlButton>
            <svg width="16" height="14" viewBox="0 0 16 14" fill="currentColor"><rect width="15" height="2" /><rect y="4" width="15" height="2" /><rect y="8" width="15" height="2" /><rect y="12" width="10" height="2" /><path d="M12 10.500l4 2.500-4 1z" /></svg>
          </CtrlButton>
          <CtrlButton>
            <svg width="16" height="14" viewBox="0 0 16 14" fill="none" stroke="currentColor" strokeWidth="2"><path d="M1 7V4a1 1 0 0 1 1-1h10M15 7v3a1 1 0 0 1-1 1H4" /><path d="M11 0l3 3-3 3M5 8l-3 3 3 3" strokeWidth="1.500" /></svg>
          </CtrlButton>
          <CtrlButton>
            <svg width="15" height="14" viewBox="0 0 15 14" fill="none" stroke="currentColor" strokeWidth="2"><path d="M0 2h3l8 10h3M0 12h3l8-10h3" /></svg>
          </CtrlButton>

          <VolumeArea>
            <svg width="16" height="14" viewBox="0 0 16 14">
              <path d="M0 4h3l4-4v14l-4-4H0z" fill="#777" />
              <path d="M10 3a6 6 0 0 1 0 8M12.500 1a9 9 0 0 1 0 12" fill="none" stroke="#f09020" strokeWidth="1.300" />
            </svg>
            <svg width="74" height="22" viewBox="0 0 74 22">
              <path d="M1 21 73 1v20z" fill="#f7f7f7" stroke="#888" strokeWidth="1.200" />
              <path d="M2 20.500 59 5v15.500z" fill="#22c31e" />
            </svg>
            <VolumeLabel>100%</VolumeLabel>
          </VolumeArea>
        </ButtonRow>
      </Controls>
    </Player>
  </>
);

export default App;
